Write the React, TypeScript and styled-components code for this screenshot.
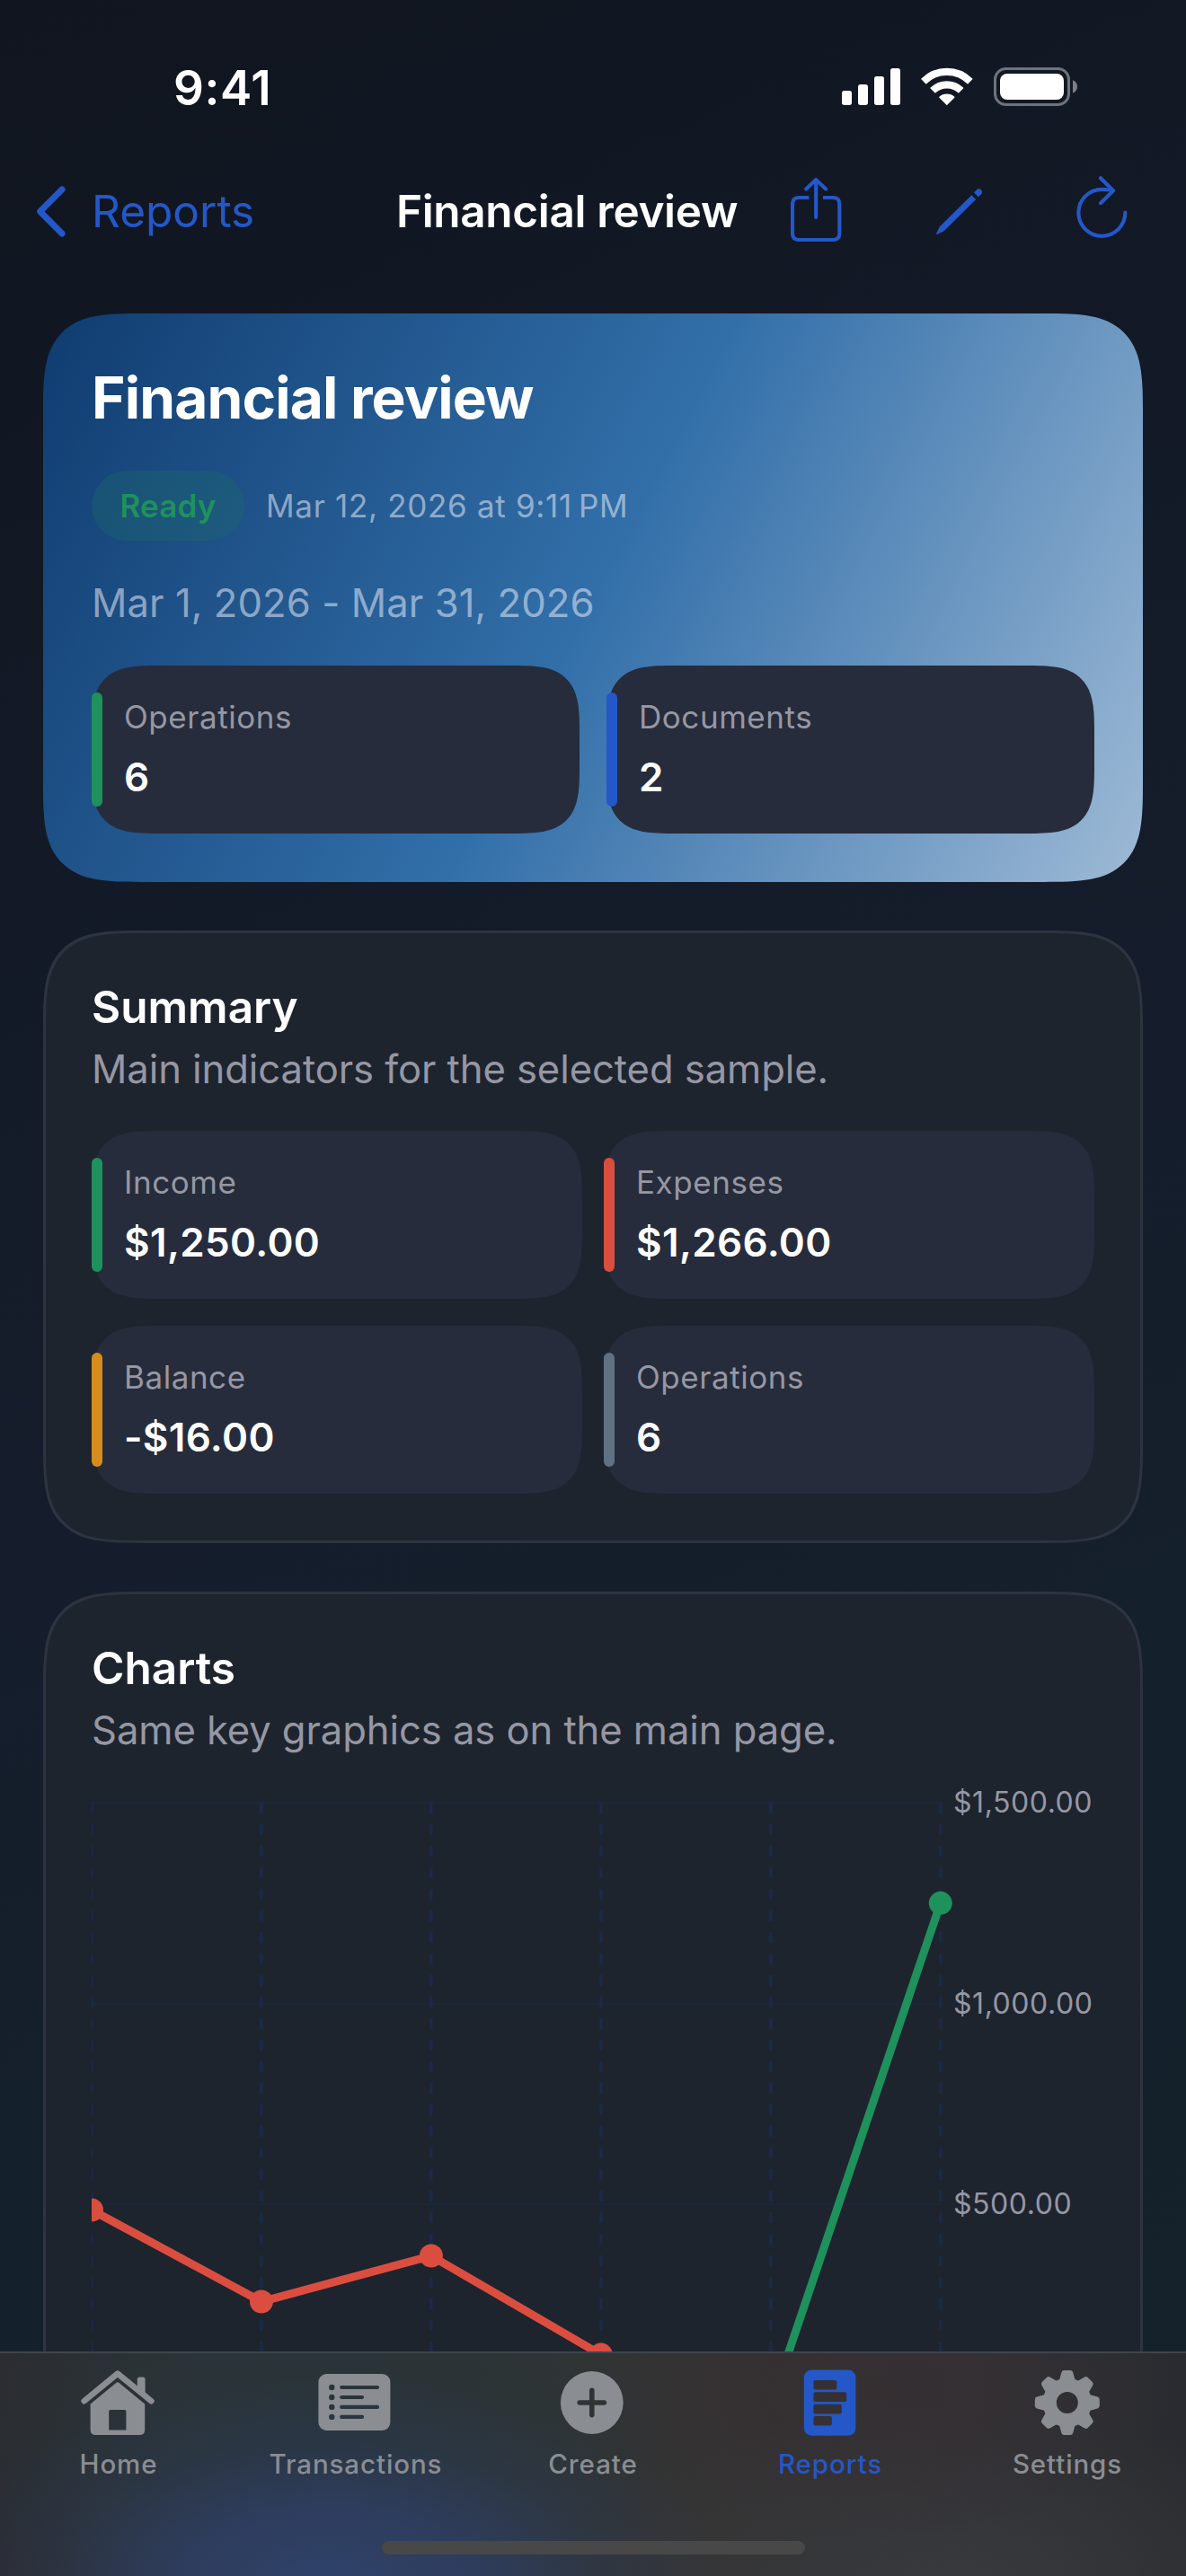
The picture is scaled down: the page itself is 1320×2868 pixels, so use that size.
import React from "react";
import styled, { createGlobalStyle, css } from "styled-components";

const colors = {
  blue: "#2457c8",
  green: "#1f915c",
  red: "#db4e3f",
  orange: "#d68d1b",
  slate: "#607182",
  secondary: "#9697a4",
  tile: "#262c3b",
};

/* Continuous corner: circular-looking radius with a longer, softer shoulder. */
const continuous = (r: number) => css`
  border-radius: ${r}px;
  @supports (corner-shape: superellipse(1.7)) {
    border-radius: ${r * 1.528}px;
    corner-shape: superellipse(1.7);
  }
`;

const GlobalStyle = createGlobalStyle`
  *, *::before, *::after { box-sizing: border-box; }
  body {
    margin: 0;
    background: #10151f;
    font-family: Inter, "Liberation Sans", sans-serif;
    color: #fff;
    -webkit-font-smoothing: antialiased;
  }
  svg { display: block; flex: none; }
`;

const Screen = styled.div`
  width: 1320px;
  height: 2868px;
  display: flex;
  flex-direction: column;
  overflow: hidden;
  background: linear-gradient(155.3deg, #10151f 0%, #151d2c 50%, #14202b 70%, #14222b 100%);
`;

/* ---------- status bar ---------- */

const StatusBar = styled.header`
  flex: none;
  height: 176px;
  padding: 68px 121.5px 0 193px;
  display: flex;
  justify-content: space-between;
  align-items: flex-start;
`;

const Clock = styled.span`
  font-size: 53px;
  line-height: 60px;
  font-weight: 600;
  letter-spacing: 0.6px;
`;

const StatusIcons = styled.div`
  display: flex;
  gap: 22.7px;
  padding-top: 7px;
`;

/* ---------- navigation bar ---------- */

const NavBar = styled.nav`
  flex: none;
  height: 118px;
  display: grid;
  grid-template-columns: 441px 439px 1fr;
  align-items: center;
`;

const BackButton = styled.button`
  all: unset;
  display: flex;
  align-items: center;
  gap: 29px;
  padding-left: 40px;
  color: ${colors.blue};
  font-size: 49.5px;
  line-height: 60px;
`;

const NavTitle = styled.span`
  font-size: 49.5px;
  line-height: 60px;
  font-weight: 600;
  letter-spacing: -0.35px;
  white-space: nowrap;
`;

const NavActions = styled.div`
  display: flex;
  gap: 104.5px;
  padding-bottom: 5px;
  color: ${colors.blue};
`;

/* ---------- cards ---------- */

const Content = styled.main`
  flex: 1;
  min-height: 0;
  overflow: hidden;
  padding: 55px 48px 0;
  display: flex;
  flex-direction: column;
  gap: 54px;
`;

const HeroCard = styled.section`
  flex: none;
  height: 633px;
  padding: 54px;
  display: flex;
  flex-direction: column;
  gap: 42px;
  background: linear-gradient(117.35deg, #103c70 0%, #326fa9 50%, #9ebad6 100%);
  ${continuous(72)}
`;

const Card = styled.section<{ $height: number }>`
  flex: none;
  height: ${(p) => p.$height}px;
  padding: 51px;
  display: flex;
  flex-direction: column;
  gap: 42px;
  background: #1d242e;
  border: 3px solid #2d3440;
  ${continuous(72)}
`;

const HeroTitle = styled.h1`
  margin: 0;
  font-size: 64px;
  line-height: 80px;
  font-weight: 700;
  letter-spacing: -0.85px;
`;

const HeroMeta = styled.div`
  display: flex;
  align-items: center;
  gap: 24px;
  height: 78px;
  margin-top: -1px;
  margin-bottom: 1px;
`;

const StatusChip = styled.span`
  height: 78px;
  width: 170px;
  border-radius: 39px;
  background: rgba(27, 104, 104, 0.36);
  color: ${colors.green};
  font-size: 35px;
  line-height: 78px;
  font-weight: 600;
  letter-spacing: 0.2px;
  text-align: center;
`;

const MetaText = styled.span`
  font-size: 35px;
  line-height: 54px;
  letter-spacing: 0.68px;
  color: rgba(235, 238, 248, 0.55);
`;

const RangeText = styled.div`
  font-size: 43.6px;
  line-height: 54px;
  letter-spacing: 0.1px;
  color: rgba(235, 238, 248, 0.55);
`;

const SectionHead = styled.div`
  display: flex;
  flex-direction: column;
  gap: 11px;
`;

const SectionTitle = styled.h2`
  margin: 0;
  font-size: 49.5px;
  line-height: 63px;
  font-weight: 600;
`;

const SectionNote = styled.p`
  margin: 0;
  font-size: 43.6px;
  line-height: 53px;
  letter-spacing: -0.08px;
  color: ${colors.secondary};
`;

/* ---------- metric tiles ---------- */

const TileGrid = styled.div<{ $gap: number }>`
  display: grid;
  grid-template-columns: 1fr 1fr;
  column-gap: ${(p) => p.$gap}px;
  row-gap: 30px;
`;

const TileBox = styled.div`
  height: 187px;
  padding: 30px 30px 30px 0;
  display: flex;
  gap: 24px;
  background: ${colors.tile};
  ${continuous(50)}
`;

const TileBar = styled.i<{ $color: string }>`
  flex: none;
  width: 12px;
  border-radius: 6px;
  background: ${(p) => p.$color};
`;

const TileText = styled.div`
  display: flex;
  flex-direction: column;
  gap: 12px;
`;

const TileLabel = styled.span`
  font-size: 35px;
  line-height: 55px;
  letter-spacing: 0.55px;
  color: ${colors.secondary};
`;

const TileValue = styled.span`
  font-size: 44px;
  line-height: 55px;
  font-weight: 600;
  letter-spacing: 0.35px;
`;

function Tile({ label, value, color }: { label: string; value: string; color: string }) {
  return (
    <TileBox>
      <TileBar $color={color} />
      <TileText>
        <TileLabel>{label}</TileLabel>
        <TileValue>{value}</TileValue>
      </TileText>
    </TileBox>
  );
}

/* ---------- chart ---------- */

const ChartRow = styled.div`
  display: flex;
`;

const Axis = styled.div`
  display: flex;
  flex-direction: column;
  gap: 199.65px;
`;

const AxisLabel = styled.span`
  font-size: 32px;
  line-height: 24px;
  letter-spacing: 0.55px;
  color: ${colors.secondary};
`;

const STEP_X = 188.95;
const STEP_Y = 223.65;
const TOP = 12;
const MAX = 1500;
const expenses = [486, 258, 372, 126];
const income = [0, 1250];

const px = (i: number) => i * STEP_X;
const py = (v: number) => TOP + ((MAX - v) / 500) * STEP_Y;

function Plot() {
  return (
    <svg width="959" height="700" viewBox="0 0 959 700">
      {[0, 1, 2, 3].map((i) => (
        <line key={i} x1={0} x2={px(5)} y1={TOP + i * STEP_Y} y2={TOP + i * STEP_Y} stroke="#1b283b" strokeWidth={2} />
      ))}
      {[0, 1, 2, 3, 4, 5].map((i) => (
        <line key={i} x1={px(i)} x2={px(i)} y1={TOP} y2={700} stroke="#1a2a48" strokeWidth={3.4} strokeDasharray="12 12" />
      ))}
      <polyline
        points={expenses.map((v, i) => `${px(i)},${py(v)}`).join(" ")}
        fill="none" stroke={colors.red} strokeWidth={9} strokeLinejoin="round"
      />
      {expenses.map((v, i) => <circle key={i} cx={px(i)} cy={py(v)} r={13} fill={colors.red} />)}
      <polyline
        points={income.map((v, i) => `${px(i + 4)},${py(v)}`).join(" ")}
        fill="none" stroke={colors.green} strokeWidth={9}
      />
      {income.map((v, i) => <circle key={i} cx={px(i + 4)} cy={py(v)} r={13} fill={colors.green} />)}
    </svg>
  );
}

/* ---------- tab bar ---------- */

const TabBar = styled.footer`
  flex: none;
  height: 250px;
  border-top: 2px solid #40454c;
  display: flex;
  flex-direction: column;
  align-items: center;
  background:
    radial-gradient(ellipse 440px 235px at 365px 262px, rgba(47, 67, 110, 0.95) 0%, rgba(46, 63, 102, 0.8) 38%, rgba(44, 58, 84, 0.4) 70%, rgba(44, 56, 78, 0) 100%),
    radial-gradient(ellipse 440px 210px at 330px 90px, rgba(40, 52, 58, 0.95) 0%, rgba(42, 52, 56, 0) 100%),
    radial-gradient(ellipse 330px 170px at 980px 40px, rgba(54, 47, 50, 0.85) 0%, rgba(54, 48, 50, 0) 100%),
    radial-gradient(ellipse 430px 200px at 1060px 260px, rgba(56, 58, 61, 0.95) 0%, rgba(56, 58, 61, 0) 100%),
    linear-gradient(90deg, #2b2b30 0%, #2d3234 15%, #303434 45%, #343333 60%, #313135 82%, #292b30 100%);
`;

const Tabs = styled.div`
  width: 100%;
  display: grid;
  grid-template-columns: repeat(5, 1fr);
  padding-top: 17px;
`;

const Tab = styled.a<{ $active?: boolean }>`
  display: flex;
  flex-direction: column;
  align-items: center;
  gap: 12px;
  font-size: 29.5px;
  line-height: 36px;
  font-weight: 500;
  letter-spacing: 0.9px;
  color: ${(p) => (p.$active ? colors.blue : "#8a8d92")};
`;

const HomeIndicator = styled.div`
  margin-top: 68px;
  width: 471px;
  height: 15px;
  border-radius: 7.5px;
  background: #484848;
`;

const HomeIcon = () => (
  <svg width="84" height="76" viewBox="90 2637 84 76" fill="currentColor">
    <path d="M93.6 2673.2 L130.9 2642.6 L168.4 2673.2" fill="none" stroke="currentColor" strokeWidth="6.6" strokeLinecap="round" strokeLinejoin="round" />
    <path d="M152.8 2661 V2649.2 Q152.8 2646.6 155.4 2646.6 H159 Q161.6 2646.6 161.6 2649.2 V2668.5 Z" />
    <path
      fillRule="evenodd"
      d="M129.2 2653 Q130.9 2651.6 132.6 2653 L161.2 2676.4 V2705 Q161.2 2711 155.2 2711 H106.6 Q100.6 2711 100.6 2705 V2676.4 Z M123 2683 Q121.2 2683 121.2 2684.8 V2705.4 H140.4 V2684.8 Q140.4 2683 138.6 2683 Z"
    />
  </svg>
);

const TransactionsIcon = () => (
  <svg width="84" height="76" viewBox="354 2637 84 76">
    <mask id="list-cut" maskUnits="userSpaceOnUse" x="354" y="2637" width="84" height="76">
      <rect x="354.4" y="2643" width="80" height="63" rx="9" fill="#fff" />
      {[2658, 2669, 2679.9, 2690.9].map((y, i) => (
        <React.Fragment key={y}>
          <circle cx="369.3" cy={y} r="3.2" fill="#000" />
          <path d={`M380.2 ${y} H${i % 2 ? 403 : 420}`} stroke="#000" strokeWidth="4.2" strokeLinecap="round" />
        </React.Fragment>
      ))}
    </mask>
    <rect x="354" y="2637" width="84" height="76" fill="currentColor" mask="url(#list-cut)" />
  </svg>
);

const CreateIcon = () => (
  <svg width="84" height="76" viewBox="618 2637 84 76">
    <mask id="plus-cut" maskUnits="userSpaceOnUse" x="618" y="2637" width="84" height="76">
      <circle cx="658.8" cy="2675" r="34.9" fill="#fff" />
      <path d="M658.8 2661.4 V2688.6 M645.2 2675 H672.4" stroke="#000" strokeWidth="5.6" strokeLinecap="round" />
    </mask>
    <rect x="618" y="2637" width="84" height="76" fill="currentColor" mask="url(#plus-cut)" />
  </svg>
);

const ReportsIcon = () => (
  <svg width="84" height="76" viewBox="882 2637 84 76">
    <mask id="doc-cut" maskUnits="userSpaceOnUse" x="882" y="2637" width="84" height="76">
      <rect x="894.8" y="2638.5" width="57.6" height="73.3" rx="8.5" fill="#fff" />
      {[[2650, 26], [2663.3, 36.8], [2676.8, 31.4], [2690, 20.4]].map(([y, w]) => (
        <rect key={y} x="905.4" y={y} width={w} height="10.6" rx="2" fill="#000" />
      ))}
    </mask>
    <rect x="882" y="2637" width="84" height="76" fill="currentColor" mask="url(#doc-cut)" />
  </svg>
);

const SettingsIcon = () => (
  <svg width="84" height="76" viewBox="1146 2637 84 76">
    <mask id="gear-cut" maskUnits="userSpaceOnUse" x="1146" y="2637" width="84" height="76">
      <g transform="translate(1187.8 2675)">
        <circle r="27.2" fill="#fff" />
        {[0, 45, 90, 135, 180, 225, 270, 315].map((a) => (
          <path key={a} transform={`rotate(${a})`} d="M-10 -22 L-8.4 -26.5 L-6.4 -33.8 Q-5.8 -36 -3.6 -36 H3.6 Q5.8 -36 6.4 -33.8 L8.4 -26.5 L10 -22 Z" fill="#fff" />
        ))}
        <circle r="12" fill="#000" />
      </g>
    </mask>
    <rect x="1146" y="2637" width="84" height="76" fill="currentColor" mask="url(#gear-cut)" />
  </svg>
);

/* ---------- header icons ---------- */

const SignalIcon = () => (
  <svg width="65" height="43" viewBox="231 75 195 129" fill="#fff">
    <rect x="231" y="153" width="33" height="48" rx="8" />
    <rect x="285" y="132" width="33" height="69" rx="8" />
    <rect x="339" y="105" width="33" height="96" rx="8" />
    <rect x="393" y="78" width="33" height="123" rx="8" />
  </svg>
);

const WifiIcon = () => (
  <svg width="57.7" height="43" viewBox="494 75 173 129" fill="#fff" stroke="#fff" strokeWidth="4" strokeLinejoin="round">
    <path d="M496.6 113.6 A120 120 0 0 1 664.4 113.6 L650 128.4 A99 99 0 0 0 511 128.4 Z" />
    <path d="M527.2 144.2 A77 77 0 0 1 633.8 144.2 L619.4 158.6 A57 57 0 0 0 541.6 158.6 Z" />
    <path d="M556.6 174.6 A35 35 0 0 1 604.4 174.6 L580.5 198.8 Z" />
  </svg>
);

const BatteryIcon = () => (
  <svg width="93" height="43" viewBox="735 75 279 129">
    <rect x="739.5" y="79.5" width="246" height="120" rx="36" fill="none" stroke="#6f737b" strokeWidth="9" />
    <rect x="756" y="96" width="213" height="87" rx="24" fill="#fff" />
    <path d="M999 118 Q1014 124 1014 139.5 Q1014 155 999 161 Z" fill="#7b7e85" />
  </svg>
);

const ChevronIcon = () => (
  <svg width="33" height="57" viewBox="0 0 33 57" fill="none" stroke="currentColor" strokeWidth="7" strokeLinecap="round" strokeLinejoin="round">
    <path d="M29 4 L4.6 28.5 L29 53" />
  </svg>
);

const ShareIcon = () => (
  <svg width="57" height="73.3" viewBox="60 438 171 220" fill="none" stroke="currentColor" strokeWidth="12.5" strokeLinecap="round" strokeLinejoin="round">
    <path d="M121 510 H88 Q66 510 66 532 V629 Q66 651 88 651 H201 Q223 651 223 629 V532 Q223 510 201 510 H168" strokeLinecap="butt" />
    <path d="M144.5 452 V576 M111.5 481.5 L144.5 450 L177.5 481.5" />
  </svg>
);

const PencilIcon = () => (
  <svg width="51.7" height="73.3" viewBox="546 438 155 220" fill="currentColor">
    <path d="M546.5 630 L557 607.5 L664 501.5 L678.5 516 L572 622 L549 633 Q545.5 633.5 546.5 630 Z" />
    <path d="M672 493.5 L682 483 Q688 477.5 695 483.5 Q703.5 490.5 697 498 L687 508 Z" />
  </svg>
);

const RefreshIcon = () => (
  <svg width="57" height="73.3" viewBox="1010 438 171 220" fill="none" stroke="currentColor" strokeWidth="12.5" strokeLinecap="round" strokeLinejoin="round">
    <path d="M1173 560 A78 78 0 1 1 1095 482.5 Q1114 482.5 1132 487" />
    <path d="M1091 444.5 L1133 487 L1091 528.5" />
  </svg>
);

export default function App() {
  return (
    <>
      <GlobalStyle />
      <Screen>
        <StatusBar>
          <Clock>9:41</Clock>
          <StatusIcons>
            <SignalIcon />
            <WifiIcon />
            <BatteryIcon />
          </StatusIcons>
        </StatusBar>

        <NavBar>
          <BackButton>
            <ChevronIcon />
            Reports
          </BackButton>
          <NavTitle>Financial review</NavTitle>
          <NavActions>
            <ShareIcon />
            <PencilIcon />
            <RefreshIcon />
          </NavActions>
        </NavBar>

        <Content>
          <HeroCard>
            <HeroTitle>Financial review</HeroTitle>
            <HeroMeta>
              <StatusChip>Ready</StatusChip>
              <MetaText>{"Mar 12, 2026 at 9:11\u202fPM"}</MetaText>
            </HeroMeta>
            <RangeText>Mar 1, 2026 - Mar 31, 2026</RangeText>
            <TileGrid $gap={30}>
              <Tile label="Operations" value="6" color={colors.green} />
              <Tile label="Documents" value="2" color={colors.blue} />
            </TileGrid>
          </HeroCard>

          <Card $height={682}>
            <SectionHead>
              <SectionTitle>Summary</SectionTitle>
              <SectionNote>Main indicators for the selected sample.</SectionNote>
            </SectionHead>
            <TileGrid $gap={24}>
              <Tile label="Income" value="$1,250.00" color={colors.green} />
              <Tile label="Expenses" value="$1,266.00" color={colors.red} />
              <Tile label="Balance" value="-$16.00" color={colors.orange} />
              <Tile label="Operations" value="6" color={colors.slate} />
            </TileGrid>
          </Card>

          <Card $height={1100}>
            <SectionHead>
              <SectionTitle>Charts</SectionTitle>
              <SectionNote>Same key graphics as on the main page.</SectionNote>
            </SectionHead>
            <ChartRow>
              <Plot />
              <Axis>
                <AxisLabel>$1,500.00</AxisLabel>
                <AxisLabel>$1,000.00</AxisLabel>
                <AxisLabel>$500.00</AxisLabel>
              </Axis>
            </ChartRow>
          </Card>
        </Content>

        <TabBar>
          <Tabs>
            <Tab><HomeIcon />Home</Tab>
            <Tab><TransactionsIcon />Transactions</Tab>
            <Tab><CreateIcon />Create</Tab>
            <Tab $active><ReportsIcon />Reports</Tab>
            <Tab><SettingsIcon />Settings</Tab>
          </Tabs>
          <HomeIndicator />
        </TabBar>
      </Screen>
    </>
  );
}
